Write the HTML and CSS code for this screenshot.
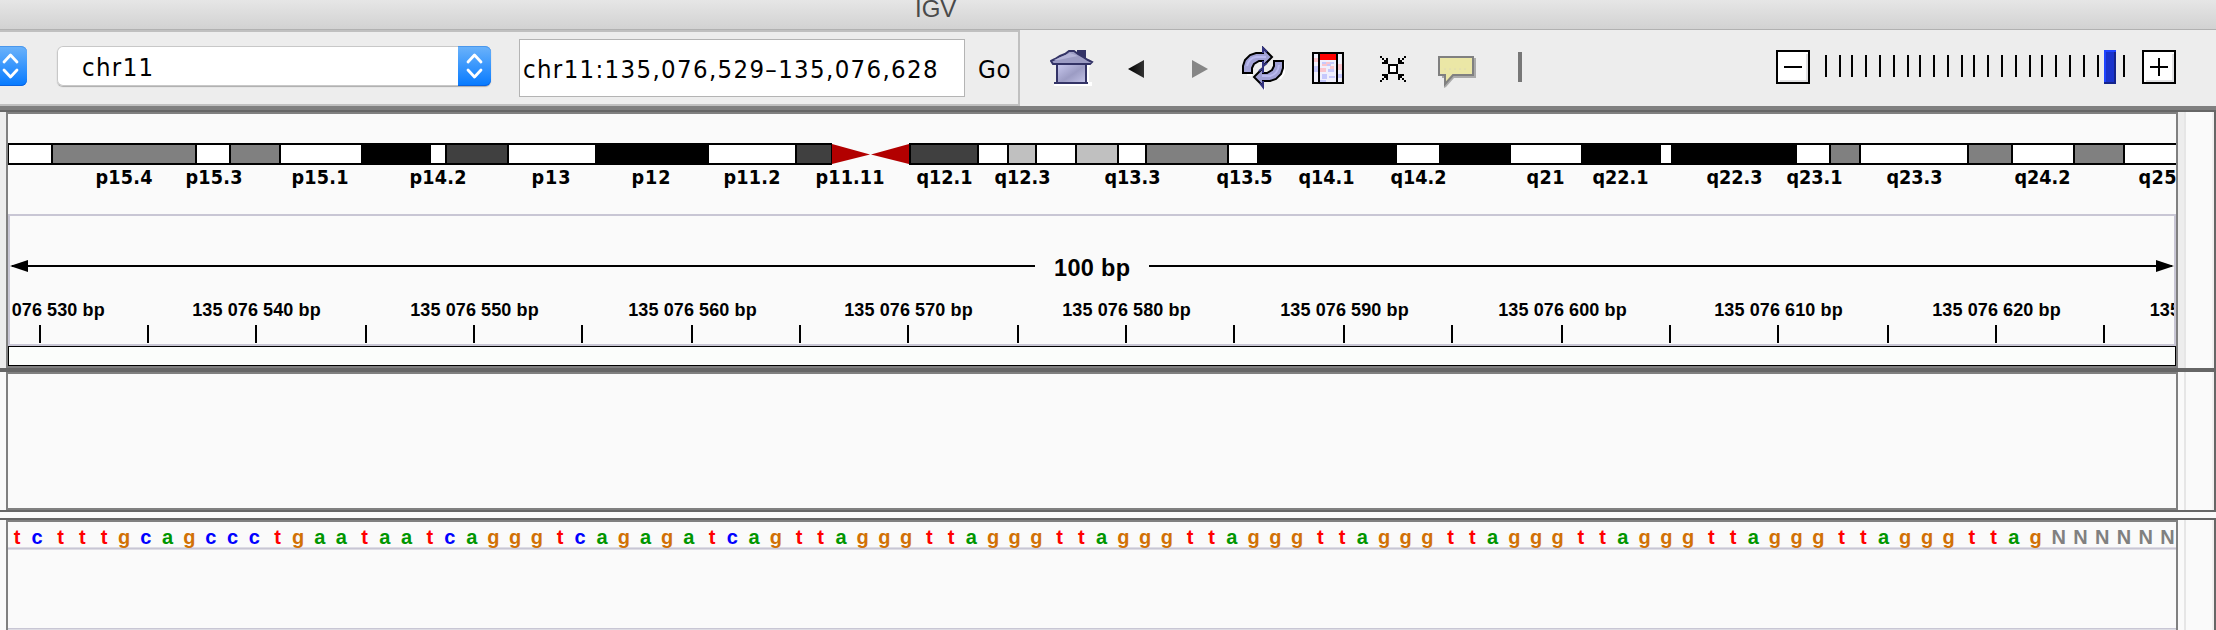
FILE: index.html
```html
<!DOCTYPE html>
<html lang="en">
<head>
<meta charset="utf-8">
<title>IGV</title>
<link rel="stylesheet" href="styles.css">
</head>
<body>
<header class="titlebar"><span class="title">IGV</span></header>
<div class="toolbar">
  <div class="locus-group">
    <span class="stepper stepper-cut"><svg width="27" height="40" viewBox="0 0 27 40"><path d="M4 16l6.5-7 6.500 7M4 24l6.500 7 6.500-7"/></svg></span>
    <div class="select"><span class="select-value">chr11</span><span class="stepper"><svg width="33" height="40" viewBox="0 0 33 40"><path d="M10 16l6.500-7 6.500 7M10 24l6.500 7 6.500-7"/></svg></span></div>
    <div class="locus">chr11:135,076,529–135,076,628</div>
    <span class="go">Go</span>
  </div>
  <div class="icons">
    <svg class="icon home" width="44" height="36" viewBox="1050 50 44 36">
      <defs><linearGradient id="hg" x1="0" y1="0" x2="1" y2="1"><stop offset="0" stop-color="#ccccf2"/><stop offset=".55" stop-color="#9c9cc4"/><stop offset="1" stop-color="#c4c4e8"/></linearGradient></defs>
      <path d="M1090 66h-2v17h3v2h-37" fill="none" stroke="#fff" stroke-width="2"/>
      <path d="M1077 50h9v11h-9z" fill="#333366"/>
      <path d="M1057 63h29v20h-29z" fill="url(#hg)" stroke="#333366" stroke-width="2"/>
      <path d="M1051 61l4-2 5-3 5-2 4-3h5l4 3 5 3 5 3 4 2-2 2h-37z" fill="#9c9cc4" stroke="#333366" stroke-width="2"/>
      <path d="M1054 60l16-7 8 3-20 4z" fill="#b4b4d8"/>
      <path d="M1054 82h34v2h-34z" fill="#333366"/>
    </svg>
    <svg class="icon back" width="16" height="18" viewBox="0 0 16 18"><defs><linearGradient id="bg"><stop offset="0" stop-color="#000"/><stop offset="1" stop-color="#333"/></linearGradient></defs><path d="M0 9L16 0v18z" fill="url(#bg)"/></svg>
    <svg class="icon fwd" width="16" height="18" viewBox="0 0 16 18"><path d="M16 9L0 0v18z" fill="#868686"/></svg>
    <svg class="icon refresh" width="44" height="44" viewBox="1242 46 44 44">
      <path d="M1252 75h-5M1264 88v2M1284 62v11l-4 6" fill="none" stroke="#fff" stroke-width="2"/>
      <g fill="#a2a2d6" stroke="#000" stroke-width="2">
        <path d="M1243 73V66l2-6 5-5 6-2h7V48l9 9-9 9v-5h-4l-5 3-2 4v5z"/>
        <path d="M1283 61v7l-2 6-5 5-6 2h-7v5l-9-9 9-9v5h4l5-3 2-4v-5z"/>
      </g>
      <path d="M1263 53V48l4 4M1263 81v6l-3-4M1263 61v5l4-3M1263 73v-5l-4 3" fill="none" stroke="#333380" stroke-width="2"/>
      <path d="M1247 66q2-8 9-9h10M1279 65q-1 9-9 11h-8" fill="none" stroke="#babaf0" stroke-width="2"/>
    </svg>
    <svg class="icon region" width="32" height="32" viewBox="0 0 32 32" shape-rendering="crispEdges">
      <path d="M1 1h28v30H1z" fill="#f0effc"/>
      <path d="M8 2h16v6H8z" fill="#f00"/>
      <path d="M2 6h4v4H2zM26 12h4v6h-4zM8 16h6v4H8zM10 12h6v2h-6zM18 14h4v3h-4zM13 10h7v2h-7z" fill="#fac4cc"/>
      <path d="M2 14h4v6H2zM10 10h4v2h-4zM16 17h6v3h-6zM10 22h5v5h-5zM17 24h6v2h-6zM26 22h4v4h-4zM15 12h4v2h-4zM8 28h6v2H8zM18 10h4v2h-4z" fill="#c6c8fc"/>
      <path d="M1 1h30v30H1zM7 1v30M25 1v30" fill="none" stroke="#000" stroke-width="2"/>
    </svg>
    <svg class="icon fit" width="26" height="26" viewBox="0 0 26 26" shape-rendering="crispEdges">
      <path d="M9 9h8v8H9z" fill="#fff" stroke="#000" stroke-width="2"/>
      <g fill="#000"><path d="M0 0h2v2H0zM2 2h2v2H2zM4 4h2V2h2v6H2V6h2z"/><path d="M24 0h2v2h-2zM22 2h2v2h-2zM22 4h-2V2h-2v6h6V6h-2z"/><path d="M0 24h2v2H0zM2 22h2v2H2zM4 22h2v2h2v-6H2v2h2z"/><path d="M24 24h2v2h-2zM22 22h2v2h-2zM22 22h-2v2h-2v-6h6v2h-2z"/></g>
    </svg>
    <svg class="icon note" width="38" height="33" viewBox="0 0 38 33">
      <path d="M4 2h34v20H16l-8 9-2 1V22H4z" fill="#aaa"/>
      <path d="M1 1h34v18H15l-8 9V19H1z" fill="#ebe7a6" stroke="#808080" stroke-width="2"/>
      <path d="M6 13h22" stroke="#dedab4" stroke-dasharray="2 3"/>
    </svg>
    <span class="divider"></span>
  </div>
  <svg class="zoom" width="400" height="34" viewBox="1776 50 400 34" shape-rendering="crispEdges">
    <path d="M1777 51h32v32h-32zM2143 51h32v32h-32z" fill="#fff" stroke="#000" stroke-width="2"/>
    <path d="M1780 81h27V54M2146 81h27V54" fill="none" stroke="#e2e2e4" stroke-width="2"/>
    <path d="M1784 67h18M2150 67h18M2159 58v18" stroke="#000" stroke-width="2"/>
    <g id="zoom-ticks"></g>
    <path d="M2104 50h12v34h-12z" fill="#1a33cc"/><path d="M2104 50h12v2h-10v32h-2z" fill="#1f44ff"/><path d="M2114 52h2v32h-12v-2h10z" fill="#14248c"/>
  </svg>
</div>
<div class="rule"></div>
<main>
  <section class="panel header-panel">
    <div class="gutter"></div>
    <div class="data">
      <svg class="ideogram" id="ideogram" width="2168" height="100" viewBox="8 114 2168 100"></svg>
      <div class="ruler"><svg id="ruler" width="2164" height="128" viewBox="10 216 2164 128"></svg></div>
      <div class="region-bar"></div>
    </div>
    <div class="scroll"></div>
  </section>
  <section class="panel tracks-panel">
    <div class="gutter"></div><div class="data"></div><div class="scroll"></div>
  </section>
  <div class="gap"></div>
  <section class="panel feature-panel">
    <div class="gutter"></div>
    <div class="data">
      <svg class="sequence" id="sequence" width="2168" height="25" viewBox="8 522 2168 25"></svg>
      <div class="track"></div>
    </div>
    <div class="scroll"></div>
  </section>
</main>
<script src="browser.js"></script>
</body>
</html>
```
FILE: styles.css
```css
* { box-sizing: border-box; }
body { margin: 0; width: 2216px; height: 630px; overflow: hidden; background: #fafafa; font-family: "DejaVu Sans Condensed", "DejaVu Sans", sans-serif; font-stretch: condensed; color: #000; display: flex; flex-direction: column; }
svg { display: block; flex: none; }
.titlebar { height: 30px; flex: none; background: linear-gradient(#e6e6e6, #d2d2d2); border-bottom: 1px solid #b1b1b1; overflow: hidden; padding-left: 915px; }
.title { display: block; margin-top: -5px; font: 24px/28px "Liberation Sans", sans-serif; color: #4a4a4a; }
.toolbar { height: 76px; flex: none; background: #ededed; display: flex; }
.locus-group { width: 1020px; flex: none; display: flex; align-items: flex-start; border: 2px solid #c0c0c0; border-left: 0; font-size: 25.5px; letter-spacing: 1.35px; }
.stepper { display: block; flex: none; background: linear-gradient(#6cb3fa, #067aff); box-shadow: inset 0 1px #4a97ec, inset 0 -1px #0a63e0; border-radius: 0 6px 6px 0; }
.stepper path { fill: none; stroke: #fff; stroke-width: 2.8; stroke-linecap: round; stroke-linejoin: round; }
.stepper-cut { margin-top: 14px; }
.select { margin: 14px 0 0 30px; width: 434px; height: 40px; background: #fff; border-radius: 6px; box-shadow: inset 0 0 0 1px #c8c8c8, 0 1px 1px #aaa; display: flex; justify-content: space-between; }
.select-value { padding-left: 25px; line-height: 42px; }
.locus { margin: 7px 0 0 28px; width: 446px; height: 58px; background: #fff; border: 1px solid #b4b4b4; padding-left: 3px; line-height: 58px; white-space: nowrap; }
.go { margin: 7px 0 0 13px; line-height: 60px; letter-spacing: 0.8px; }
.icons { display: flex; align-items: flex-start; width: 756px; flex: none; }
.icon { margin-top: 20px; }
.home { margin-left: 30px; }
.back { margin: 30px 0 0 34px; }
.fwd { margin: 30px 0 0 48px; }
.refresh { margin: 16px 0 0 34px; }
.region { margin: 22px 0 0 26px; }
.fit { margin: 26px 0 0 36px; }
.note { margin: 26px 0 0 32px; }
.divider { width: 4px; height: 30px; margin: 22px 0 0 42px; background: #777; }
.zoom { margin-top: 20px; }
.rule { height: 6px; flex: none; background: #666; border-top: 4px solid #808080; }
main { flex: 1; display: flex; flex-direction: column; }
.panel { display: flex; flex: none; border-right: 2px solid #666; }
.gutter { width: 6px; flex: none; }
.data { width: 2172px; flex: none; border: 2px solid #808080; background: #fafafa; }
.scroll { flex: 1; background: linear-gradient(to right, transparent 6px, #e6e6e6 6px 8px, #fafafa 8px 34px, #f0f0f0 34px); }
.header-panel { height: 260px; border-bottom: 4px solid #666; background: #ededed; }
.header-panel .data { height: 256px; }
.tracks-panel { height: 140px; border-bottom: 2px solid #666; }
.tracks-panel .data { height: 138px; }
.gap { height: 6px; flex: none; }
.feature-panel { height: 112px; border-top: 2px solid #666; }
.feature-panel .data { height: 110px; border-bottom: 0; }
.ruler { border: 2px solid #c8c6d4; }
.region-bar { height: 20px; border: 1px solid #000; background: #fbfdfb; }
.sequence { overflow: visible; position: relative; }
.track { height: 83px; border: solid #dddce4; border-width: 1px 0; background: linear-gradient(#c8c6d4 1px, #dddce4 1px 2px, transparent 2px calc(100% - 1px), #c8c6d4 0); }
.band-label { font: bold 19.6px "DejaVu Sans Condensed", "DejaVu Sans", sans-serif; font-stretch: condensed; }
.tick-label { font: bold 18px "Liberation Sans", sans-serif; letter-spacing: 0.1px; text-anchor: middle; }
.span-label { font: bold 23.5px "Liberation Sans", sans-serif; }
.base { font: bold 20px "Liberation Sans", sans-serif; text-anchor: middle; }
.t { fill: #f00; } .c { fill: #00f; } .a { fill: #009600; } .g { fill: #d17105; } .n { fill: #808080; }
```
FILE: browser.js
```javascript
const NS = "http://www.w3.org/2000/svg";
function add(parent, tag, attrs, text) {
  const el = document.createElementNS(NS, tag);
  for (const k in attrs) el.setAttribute(k, attrs[k]);
  if (text) el.textContent = text;
  parent.appendChild(el);
}
const byId = id => document.getElementById(id);

// Zoom slider
for (const x of [1825,1839,1851,1865,1879,1893,1907,1919,1933,1947,1961,1973,1987,2001,2015,2029,2041,2055,2069,2083,2097,2123])
  add(byId("zoom-ticks"), "rect", {x, y: 55, width: 2, height: 22});

// Cytobands: start, end, fill
const ideo = byId("ideogram");
add(ideo, "rect", {x: 8, y: 143, width: 824, height: 22});
add(ideo, "rect", {x: 909, y: 143, width: 1267, height: 22});
const W = "#fff", G = "#808080", D = "#404040", L = "#c0c0c0";
for (const [a, b, fill] of [[9,51,W],[53,195,G],[197,229,W],[231,279,G],[281,361,W],[431,445,W],[447,507,D],[509,595,W],[709,795,W],[797,831,D],
  [911,977,D],[979,1007,W],[1009,1035,L],[1037,1075,W],[1077,1117,L],[1119,1145,W],[1147,1227,G],[1229,1257,W],[1397,1439,W],[1511,1581,W],
  [1661,1671,W],[1797,1829,W],[1831,1859,G],[1861,1967,W],[1969,2011,G],[2013,2073,W],[2075,2123,G],[2125,2176,W]])
  add(ideo, "rect", {x: a, y: 145, width: b - a, height: 18, fill});
add(ideo, "path", {d: "M832 144L870 154.500L832 164zM909 144L871 154.500L909 164z", fill: "#b20000"});
for (const [x, w, s] of [[96,56,"p15.4"],[186,56,"p15.3"],[292,56,"p15.1"],[410,56,"p14.2"],[532,38,"p13"],[632,38,"p12"],[724,56,"p11.2"],[816,68,"p11.11"],
  [917,55,"q12.1"],[995,55,"q12.3"],[1105,55,"q13.3"],[1217,55,"q13.5"],[1299,55,"q14.1"],[1391,55,"q14.2"],[1527,37,"q21"],[1593,55,"q22.1"],
  [1707,55,"q22.3"],[1787,55,"q23.1"],[1887,55,"q23.3"],[2015,55,"q24.2"],[2139,37,"q25"]])
  add(ideo, "text", {x: x - 0.5, y: 184, class: "band-label", textLength: w + 1}, s);

// Ruler
const ruler = byId("ruler");
add(ruler, "path", {d: "M12 265h1023v2H12zM1149 265h1023v2H1149z"});
add(ruler, "path", {d: "M10 266l18-6v12zM2174 266l-18-6v12z"});
add(ruler, "text", {x: 1054, y: 276, class: "span-label", textLength: 76}, "100 bp");
[39,147,255,365,473,581,691,799,907,1017,1125,1233,1343,1451,1561,1669,1777,1887,1995,2103].forEach((x, i) => {
  add(ruler, "rect", {x, y: 325, width: 2, height: 18});
  if (i % 2 === 0) add(ruler, "text", {x: x + 1.5, y: 316, class: "tick-label"}, `135 076 ${530 + i * 5} bp`);
});
add(ruler, "text", {x: 2214, y: 316, class: "tick-label"}, "135 076 630 bp");

// Reference sequence
const seq = "tctttgcagccctgaataatcagggtcagagatcag" + "ttaggg".repeat(9) + "ttag" + "NNNNNN";
const nudge = {t: 17.1, a: 15.6, g: 15.6, c: 15.4, N: 17.1};
[...seq].forEach((b, i) => add(byId("sequence"), "text", {x: (nudge[b] + 21.72 * i).toFixed(1), y: 544, class: "base " + b.toLowerCase()}, b));
```
